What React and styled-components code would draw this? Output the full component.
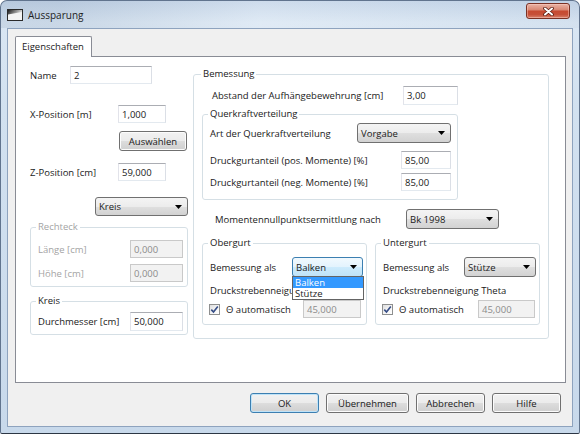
import React from 'react';
import styled, { createGlobalStyle } from 'styled-components';

const GlobalStyle = createGlobalStyle`
  html, body {
    margin: 0;
    padding: 0;
    background: #ffffff;
  }

  body {
    font-family: "Open Sans", "Liberation Sans", sans-serif;
    font-size: 9.5px;
    color: #1a1a1a;
  }

  * {
    box-sizing: border-box;
  }
`;

const Window = styled.div`
  width: 580px;
  height: 434px;
  display: flex;
  flex-direction: column;
  border: 1px solid #61748e;
  border-bottom-color: #2c3644;
  border-radius: 7px 7px 2px 2px;
  background: linear-gradient(180deg, #c3d4e8 0%, #d9e6f3 5%, #d2e1f0 25%, #c8d9eb 100%);
  overflow: hidden;
`;

const TitleBar = styled.div`
  height: 27px;
  flex-shrink: 0;
  display: flex;
  align-items: center;
  padding-left: 6px;
  background: linear-gradient(90deg, rgba(120, 140, 165, 0.16) 10%, rgba(255, 255, 255, 0.18) 45%, rgba(150, 170, 195, 0.08) 100%);
`;

const Title = styled.span`
  margin-left: 5px;
  font-size: 10px;
  color: #1e1e1e;
`;

const CloseButton = styled.div`
  width: 44px;
  height: 16px;
  margin: 2px 9px 0 auto;
  align-self: flex-start;
  display: flex;
  align-items: center;
  justify-content: center;
  border: 1px solid #7a3124;
  border-radius: 3px;
  background: linear-gradient(180deg, #eab3a5 0%, #d98a76 40%, #c74a31 52%, #c65038 75%, #d9826c 100%);
  box-shadow: inset 0 0 0 1px rgba(255, 210, 200, 0.45);
`;

const Client = styled.div`
  height: 399px;
  margin: 0 6px;
  border: 1px solid #8ea3be;
  background: #f0f0f0;
  display: flex;
  flex-direction: column;
  padding: 7px 0 0 7px;
`;

const TabStrip = styled.div`
  display: flex;
`;

const Tab = styled.div`
  position: relative;
  z-index: 1;
  width: 77px;
  height: 21px;
  margin-bottom: -1px;
  padding-left: 6px;
  line-height: 19px;
  background: #ffffff;
  border: 1px solid #898c95;
  border-bottom: none;
  border-radius: 2px 2px 0 0;
`;

const Panel = styled.div`
  width: 551px;
  height: 327px;
  border: 1px solid #898c95;
  background: #ffffff;
  display: flex;
  align-items: flex-start;
  padding-left: 14px;
`;

const Column = styled.div`
  width: 158px;
  display: flex;
  flex-direction: column;
  padding-top: 9px;
`;

const Row = styled.div`
  display: flex;
  align-items: center;
  height: ${(p) => p.$h || 18}px;
  margin-top: ${(p) => p.$mt || 0}px;
  padding-left: ${(p) => p.$pl || 0}px;
`;

const Label = styled.span`
  width: ${(p) => (p.$w ? `${p.$w}px` : 'auto')};
  flex-shrink: 0;
  white-space: nowrap;
  color: ${(p) => (p.$disabled ? '#a4a4a4' : 'inherit')};
`;

const TextBox = styled.div`
  width: ${(p) => p.$w}px;
  height: 100%;
  display: flex;
  align-items: center;
  padding-left: 3px;
  border: 1px solid;
  border-color: ${(p) => (p.$disabled ? '#c9c9c9' : '#abadb3 #dbdfe6 #e3e9ef #e2e3ea')};
  background: ${(p) => (p.$disabled ? '#f2f2f2' : '#ffffff')};
  color: ${(p) => (p.$disabled ? '#8c8c8c' : 'inherit')};
`;

const Combo = styled.div`
  position: relative;
  width: ${(p) => p.$w}px;
  height: 100%;
  display: flex;
  align-items: center;
  justify-content: space-between;
  padding: 0 5px 0 3px;
  border: 1px solid ${(p) => (p.$focused ? '#3c7fb1' : '#707070')};
  border-radius: 3px;
  background: ${(p) =>
    p.$focused
      ? 'linear-gradient(180deg, #f1f9fe 0%, #e3f3fd 50%, #cdebfc 51%, #bfe3f8 100%)'
      : 'linear-gradient(180deg, #f4f4f4 0%, #ececec 50%, #dfdfdf 51%, #d2d2d2 100%)'};
`;

const DropList = styled.div`
  position: absolute;
  z-index: 5;
  top: 18px;
  left: -1px;
  width: 72px;
  border: 1px solid #646464;
  background: #ffffff;
`;

const DropItem = styled.div`
  height: 11px;
  line-height: 11px;
  padding-left: 2px;
  background: ${(p) => (p.$active ? '#3399ff' : 'transparent')};
  color: ${(p) => (p.$active ? '#ffffff' : 'inherit')};
`;

const Button = styled.button`
  width: ${(p) => p.$w}px;
  height: 20px;
  padding: 0;
  font-family: inherit;
  font-size: 9.5px;
  color: #1a1a1a;
  border: 1px solid ${(p) => (p.$default ? '#3c7fb1' : '#707070')};
  border-radius: 3px;
  background: linear-gradient(180deg, #f2f2f2 0%, #ebebeb 50%, #dddddd 51%, #cfcfcf 100%);
  box-shadow: ${(p) => (p.$default ? 'inset 0 0 0 1px #bfe3f8' : 'inset 0 0 0 1px #fcfcfc')};
`;

const ButtonRow = styled.div`
  display: flex;
  justify-content: flex-end;
  gap: 7px;
  margin-top: 10px;
  padding-right: 11px;
`;

const Group = styled.fieldset`
  width: ${(p) => p.$w}px;
  min-width: 0;
  margin: ${(p) => p.$mt || 0}px 0 0 ${(p) => p.$ml || 0}px;
  padding: 0 0 ${(p) => p.$pb || 0}px;
  border: 1px solid #d5dfe5;
  border-radius: 3px;
`;

const Legend = styled.legend`
  margin-left: ${(p) => p.$lx || 5}px;
  padding: 0 2px;
  line-height: 12px;
  color: ${(p) => (p.$disabled ? '#a4a4a4' : 'inherit')};
`;

const GurtRow = styled.div`
  display: flex;
  gap: 8px;
  margin-top: 8px;
  padding-left: 8px;
`;

const CheckLabel = styled.div`
  width: ${(p) => p.$w}px;
  display: flex;
  align-items: center;
  gap: 6px;
`;

const CheckBox = styled.span`
  width: 11px;
  height: 11px;
  display: flex;
  align-items: center;
  justify-content: center;
  border: 1px solid #8e8f8f;
  background: linear-gradient(135deg, #dedede 0%, #f6f6f6 60%, #ffffff 100%);
`;

const Arrow = () => (
  <svg width="7" height="4" viewBox="0 0 7 4">
    <polygon points="0,0 7,0 3.5,4" fill="#000" />
  </svg>
);

const Check = () => (
  <CheckBox>
    <svg width="9" height="9" viewBox="0 0 9 9">
      <path d="M1.3 4.6 L3.5 7.1 L7.8 1.4" fill="none" stroke="#364d86" strokeWidth="1.6" />
    </svg>
  </CheckBox>
);

const WindowIcon = () => (
  <svg width="16" height="12" viewBox="0 0 16 12">
    <defs>
      <linearGradient id="ico" x1="0" y1="0" x2="1" y2="0.3">
        <stop offset="0" stopColor="#1c1c1c" />
        <stop offset="1" stopColor="#d9d9d9" />
      </linearGradient>
    </defs>
    <rect x="0.5" y="0.5" width="15" height="11" fill="#f4f4f4" stroke="#2a2a2a" />
    <polygon points="1,1 15,1 15,3 1,5.5" fill="url(#ico)" />
  </svg>
);

const CloseGlyph = () => (
  <svg width="11" height="9" viewBox="0 0 11 9">
    <path d="M2 1.5 L9 7.5 M9 1.5 L2 7.5" stroke="#5a1d12" strokeWidth="3.6" strokeLinecap="round" />
    <path d="M2 1.5 L9 7.5 M9 1.5 L2 7.5" stroke="#ffffff" strokeWidth="2" strokeLinecap="round" />
  </svg>
);

// the open list of the Obergurt combo lies over the text below it, as in the dialog
const Gurt = ({ title, value, open, labelW, comboW, checkW, boxW }) => (
  <Group $w={165} $pb={6}>
    <Legend>{title}</Legend>
    <Row $h={20} $mt={8} $pl={7}>
      <Label $w={labelW}>Bemessung als</Label>
      <Combo $w={comboW} $focused={open}>
        {value}
        <Arrow />
        {open && (
          <DropList>
            <DropItem $active>Balken</DropItem>
            <DropItem>Stütze</DropItem>
          </DropList>
        )}
      </Combo>
    </Row>
    <Row $h={12} $mt={7} $pl={7}>
      <Label>Druckstrebenneigung Theta</Label>
    </Row>
    <Row $mt={4} $pl={6}>
      <CheckLabel $w={checkW}>
        <Check />
        Θ automatisch
      </CheckLabel>
      <TextBox $w={boxW} $disabled>45,000</TextBox>
    </Row>
  </Group>
);

export default function App() {
  return (
    <>
      <GlobalStyle />
      <Window>
        <TitleBar>
          <WindowIcon />
          <Title>Aussparung</Title>
          <CloseButton>
            <CloseGlyph />
          </CloseButton>
        </TitleBar>
        <Client>
          <TabStrip>
            <Tab>Eigenschaften</Tab>
          </TabStrip>
          <Panel>
            <Column>
              <Row>
                <Label $w={40}>Name</Label>
                <TextBox $w={82}>2</TextBox>
              </Row>
              <Row $mt={21}>
                <Label $w={88}>X-Position [m]</Label>
                <TextBox $w={48}>1,000</TextBox>
              </Row>
              <Row $h={20} $mt={8} $pl={89}>
                <Button $w={68}>Auswählen</Button>
              </Row>
              <Row $mt={12}>
                <Label $w={88}>Z-Position [cm]</Label>
                <TextBox $w={48}>59,000</TextBox>
              </Row>
              <Row $h={19} $mt={16} $pl={65}>
                <Combo $w={93}>
                  Kreis
                  <Arrow />
                </Combo>
              </Row>
              <Group $w={158} $mt={5} $pb={4}>
                <Legend $disabled>Rechteck</Legend>
                <Row $mt={7} $pl={7}>
                  <Label $w={92} $disabled>Länge [cm]</Label>
                  <TextBox $w={53} $disabled>0,000</TextBox>
                </Row>
                <Row $mt={6} $pl={7}>
                  <Label $w={92} $disabled>Höhe [cm]</Label>
                  <TextBox $w={53} $disabled>0,000</TextBox>
                </Row>
              </Group>
              <Group $w={158} $mt={8} $pb={3}>
                <Legend>Kreis</Legend>
                <Row $h={19} $mt={5} $pl={7}>
                  <Label $w={92}>Durchmesser [cm]</Label>
                  <TextBox $w={53}>50,000</TextBox>
                </Row>
              </Group>
            </Column>

            <Group $w={356} $mt={11} $ml={5} $pb={13}>
              <Legend $lx={7}>Bemessung</Legend>
              <Row $h={19} $mt={6} $pl={18}>
                <Label $w={191}>Abstand der Aufhängebewehrung [cm]</Label>
                <TextBox $w={55}>3,00</TextBox>
              </Row>
              <Group $w={256} $mt={3} $ml={8} $pb={8}>
                <Legend>Querkraftverteilung</Legend>
                <Row $h={20} $mt={3} $pl={7}>
                  <Label $w={147}>Art der Querkraftverteilung</Label>
                  <Combo $w={94}>
                    Vorgabe
                    <Arrow />
                  </Combo>
                </Row>
                <Row $mt={8} $pl={7}>
                  <Label $w={191}>Druckgurtanteil (pos. Momente) [%]</Label>
                  <TextBox $w={50}>85,00</TextBox>
                </Row>
                <Row $mt={4} $pl={7}>
                  <Label $w={191}>Druckgurtanteil (neg. Momente) [%]</Label>
                  <TextBox $w={50}>85,00</TextBox>
                </Row>
              </Group>
              <Row $h={20} $mt={9} $pl={21}>
                <Label $w={191}>Momentennullpunktsermittlung nach</Label>
                <Combo $w={93}>
                  Bk 1998
                  <Arrow />
                </Combo>
              </Row>
              <GurtRow>
                <Gurt title="Obergurt" value="Balken" open labelW={82} comboW={71} checkW={94} boxW={58} />
                <Gurt title="Untergurt" value="Stütze" labelW={81} comboW={72} checkW={96} boxW={57} />
              </GurtRow>
            </Group>
          </Panel>
          <ButtonRow>
            <Button $w={69} $default>OK</Button>
            <Button $w={83}>Übernehmen</Button>
            <Button $w={69}>Abbrechen</Button>
            <Button $w={69}>Hilfe</Button>
          </ButtonRow>
        </Client>
      </Window>
    </>
  );
}
